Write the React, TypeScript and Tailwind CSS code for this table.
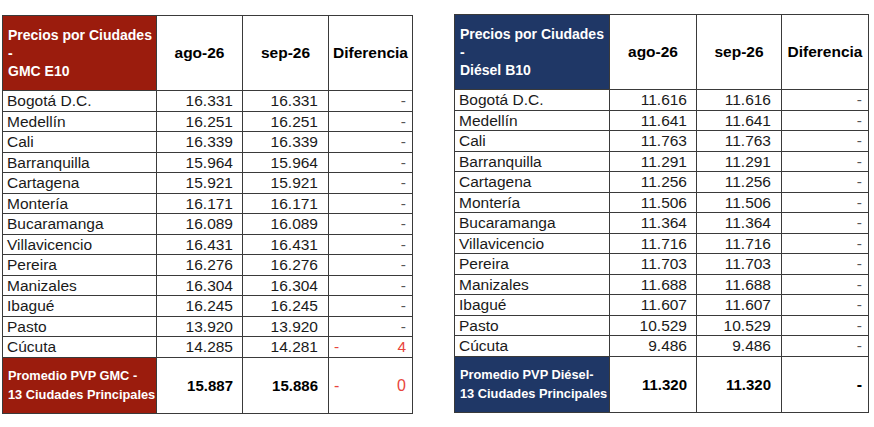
type Fila = { ciudad: string; ago: string; sep: string; dif?: string };

const gmc: Fila[] = [
  { ciudad: "Bogotá D.C.", ago: "16.331", sep: "16.331" },
  { ciudad: "Medellín", ago: "16.251", sep: "16.251" },
  { ciudad: "Cali", ago: "16.339", sep: "16.339" },
  { ciudad: "Barranquilla", ago: "15.964", sep: "15.964" },
  { ciudad: "Cartagena", ago: "15.921", sep: "15.921" },
  { ciudad: "Montería", ago: "16.171", sep: "16.171" },
  { ciudad: "Bucaramanga", ago: "16.089", sep: "16.089" },
  { ciudad: "Villavicencio", ago: "16.431", sep: "16.431" },
  { ciudad: "Pereira", ago: "16.276", sep: "16.276" },
  { ciudad: "Manizales", ago: "16.304", sep: "16.304" },
  { ciudad: "Ibagué", ago: "16.245", sep: "16.245" },
  { ciudad: "Pasto", ago: "13.920", sep: "13.920" },
  { ciudad: "Cúcuta", ago: "14.285", sep: "14.281", dif: "4" },
];

const diesel: Fila[] = [
  { ciudad: "Bogotá D.C.", ago: "11.616", sep: "11.616" },
  { ciudad: "Medellín", ago: "11.641", sep: "11.641" },
  { ciudad: "Cali", ago: "11.763", sep: "11.763" },
  { ciudad: "Barranquilla", ago: "11.291", sep: "11.291" },
  { ciudad: "Cartagena", ago: "11.256", sep: "11.256" },
  { ciudad: "Montería", ago: "11.506", sep: "11.506" },
  { ciudad: "Bucaramanga", ago: "11.364", sep: "11.364" },
  { ciudad: "Villavicencio", ago: "11.716", sep: "11.716" },
  { ciudad: "Pereira", ago: "11.703", sep: "11.703" },
  { ciudad: "Manizales", ago: "11.688", sep: "11.688" },
  { ciudad: "Ibagué", ago: "11.607", sep: "11.607" },
  { ciudad: "Pasto", ago: "10.529", sep: "10.529" },
  { ciudad: "Cúcuta", ago: "9.486", sep: "9.486" },
];

type TablaProps = {
  color: string;
  producto: string;
  filas: Fila[];
  pie: [string, string];
  promedio: [string, string, string?];
  anchos: [number, number, number, number];
};

function Tabla({ color, producto, filas, pie, promedio, anchos }: TablaProps) {
  const celda = "border border-[#3a3a3a] p-0";
  return (
    <table className="table-fixed border-collapse" style={{ width: anchos.reduce((a, b) => a + b, 0) }}>
      <colgroup>
        {anchos.map((w, i) => (
          <col key={i} style={{ width: w }} />
        ))}
      </colgroup>
      <thead>
        <tr className="h-[75px]">
          <th className={`${celda} ${color} text-left align-middle`}>
            <div className="pl-[5px] text-[14px] leading-[18px] font-bold whitespace-nowrap text-white">
              <div>Precios por Ciudades</div>
              <div>-</div>
              <div>{producto}</div>
            </div>
          </th>
          <th className={`${celda} text-center text-[15.5px] font-bold text-black`}>ago-26</th>
          <th className={`${celda} text-center text-[15.5px] font-bold text-black`}>sep-26</th>
          <th className={`${celda} text-center text-[15.5px] font-bold text-black`}>Diferencia</th>
        </tr>
      </thead>
      <tbody className="text-[15.5px] leading-[19px] text-[#1a1a1a]">
        {filas.map((f) => (
          <tr key={f.ciudad} className="h-[20.5px]">
            <td className={`${celda} pl-[4px]`}>{f.ciudad}</td>
            <td className={`${celda} pr-[9px] text-right`}>{f.ago}</td>
            <td className={`${celda} pr-[10px] text-right`}>{f.sep}</td>
            <td className={`${celda} pr-[6px]`}>
              {f.dif ? (
                <div className="flex justify-between pl-[5px] text-[#e8453c]">
                  <span>-</span>
                  <span>{f.dif}</span>
                </div>
              ) : (
                <div className="text-right text-[#555]">-</div>
              )}
            </td>
          </tr>
        ))}
        <tr className="h-[56px]">
          <td className={`${celda} ${color} pl-[5px] align-middle`}>
            <div className="text-[12.8px] leading-[19px] font-bold whitespace-nowrap text-white">
              <div>{pie[0]}</div>
              <div>{pie[1]}</div>
            </div>
          </td>
          <td className={`${celda} pr-[9px] text-right text-[15px] font-bold text-black`}>{promedio[0]}</td>
          <td className={`${celda} pr-[10px] text-right text-[15px] font-bold text-black`}>{promedio[1]}</td>
          <td className={`${celda} pr-[6px]`}>
            {promedio[2] ? (
              <div className="flex justify-between pl-[5px] text-[16px] text-[#e8453c]">
                <span>-</span>
                <span>{promedio[2]}</span>
              </div>
            ) : (
              <div className="text-right text-[16px] font-bold text-black">-</div>
            )}
          </td>
        </tr>
      </tbody>
    </table>
  );
}

export default function App() {
  return (
    <div className="h-[427px] w-[874px] overflow-hidden bg-white font-['Liberation_Sans',Arial,sans-serif]">
      <div className="flex items-start gap-[41px] pl-[2px] pt-[15px]">
        <Tabla
          color="bg-[#9b1c0d]"
          producto="GMC E10"
          filas={gmc}
          pie={["Promedio PVP GMC -", "13 Ciudades Principales"]}
          promedio={["15.887", "15.886", "0"]}
          anchos={[154, 86, 86, 84]}
        />
        <div className="-mt-[1px]">
          <Tabla
            color="bg-[#1f3766]"
            producto="Diésel B10"
            filas={diesel}
            pie={["Promedio PVP Diésel-", "13 Ciudades Principales"]}
            promedio={["11.320", "11.320"]}
            anchos={[155, 87, 85, 87]}
          />
        </div>
      </div>
    </div>
  );
}
